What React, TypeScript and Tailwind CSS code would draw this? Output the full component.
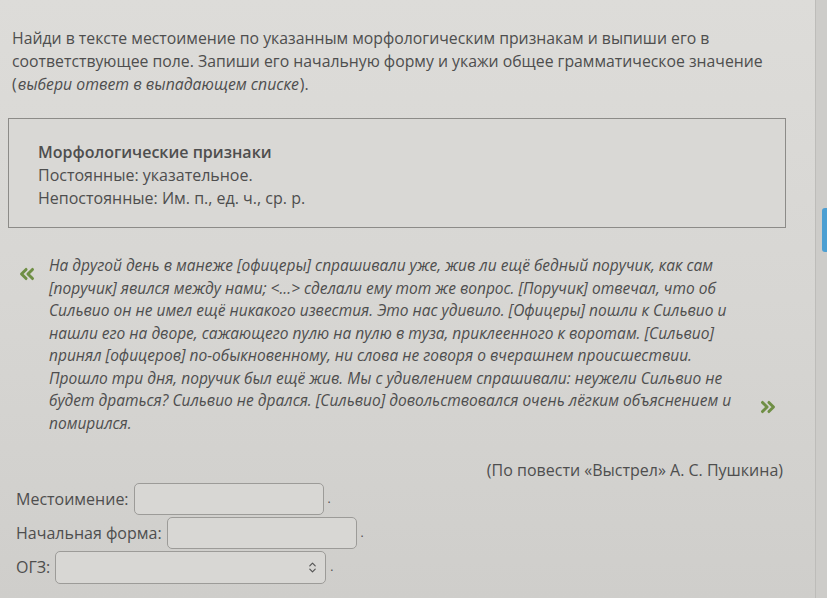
import React from "react";
import { ChevronsUpDown, ChevronsLeft, ChevronsRight } from "lucide-react";

const quoteLines = [
  "На другой день в манеже [офицеры] спрашивали уже, жив ли ещё бедный поручик, как сам",
  "[поручик] явился между нами; <...> сделали ему тот же вопрос. [Поручик] отвечал, что об",
  "Сильвио он не имел ещё никакого известия. Это нас удивило. [Офицеры] пошли к Сильвио и",
  "нашли его на дворе, сажающего пулю на пулю в туза, приклеенного к воротам. [Сильвио]",
  "принял [офицеров] по-обыкновенному, ни слова не говоря о вчерашнем происшествии.",
  "Прошло три дня, поручик был ещё жив. Мы с удивлением спрашивали: неужели Сильвио не",
  "будет драться? Сильвио не дрался. [Сильвио] довольствовался очень лёгким объяснением и",
  "помирился.",
];

function Field({ label, width }: { label: string; width: string }) {
  return (
    <div className="flex items-center h-[34px]">
      <span className="mr-[5px]">{label}</span>
      <div className={`${width} h-[32px] rounded-[5px] border border-[#9c9b98] bg-[#d8d7d4]`} />
      <span className="ml-[4px] text-[12px]">.</span>
    </div>
  );
}

export default function App() {
  return (
    <div
      className="w-[827px] h-[598px] flex overflow-hidden bg-gradient-to-b from-[#dddcd9] via-[#d7d6d3] to-[#cfcecb] text-[#4e4e4e]"
      style={{ fontFamily: '"Open Sans", "Noto Sans", sans-serif' }}
    >
      <main className="w-[815px] shrink-0">
        <p className="pt-[27px] px-3 text-[15.8px] leading-[23px]">
          Найди в тексте местоимение по указанным морфологическим признакам и выпиши его в
          соответствующее поле. Запиши его начальную форму и укажи общее грамматическое значение{" "}
          <span className="whitespace-nowrap">
            (<i className="inline-block px-[1px]">выбери ответ в выпадающем списке</i>).
          </span>
        </p>

        <section className="ml-2 mt-[22px] w-[778px] border border-[#8c8b88] bg-[#d9d8d5] pl-[29px] pt-[22px] pb-[17px] text-[16px] leading-[23px]">
          <div className="font-semibold">Морфологические признаки</div>
          <div>Постоянные: указательное.</div>
          <div>Непостоянные: Им. п., ед. ч., ср. р.</div>
        </section>

        <div className="mt-[26px] flex">
          <div className="w-[49px] shrink-0 pl-[16px] pt-[9px] text-[#6f8f45]">
            <ChevronsLeft size={22} strokeWidth={3.2} />
          </div>
          <div className="w-[704px] shrink-0 italic text-[15.5px] leading-[22.5px]">
            {quoteLines.map((l) => (
              <div key={l} className="whitespace-nowrap">
                {l}
              </div>
            ))}
          </div>
          <div className="flex items-end pb-[16px] pl-[4px] text-[#6f8f45]">
            <ChevronsRight size={22} strokeWidth={3.2} />
          </div>
        </div>

        <div className="mt-[25px] pr-[32px] text-right text-[16px] leading-[23px]">
          (По повести «Выстрел» А. С. Пушкина)
        </div>

        <div className="pl-4 text-[16px]">
          <Field label="Местоимение:" width="w-[190px]" />
          <Field label="Начальная форма:" width="w-[190px]" />
          <div className="flex items-center h-[34px]">
            <span className="mr-[5px]">ОГЗ:</span>
            <div className="w-[271px] h-[33px] rounded-[5px] border border-[#9c9b98] bg-[#d8d7d4] flex items-center justify-end pr-[6px]">
              <ChevronsUpDown size={13} strokeWidth={2.2} className="text-[#555]" />
            </div>
            <span className="ml-[4px] text-[12px]">.</span>
          </div>
        </div>
      </main>

      <aside className="flex-1 border-l border-[#bdbcb9] bg-[#cdccc9] pt-[208px] pl-[6px]">
        <div className="w-[8px] h-[44px] rounded-l-[3px] bg-[#4c9fd2]" />
      </aside>
    </div>
  );
}
